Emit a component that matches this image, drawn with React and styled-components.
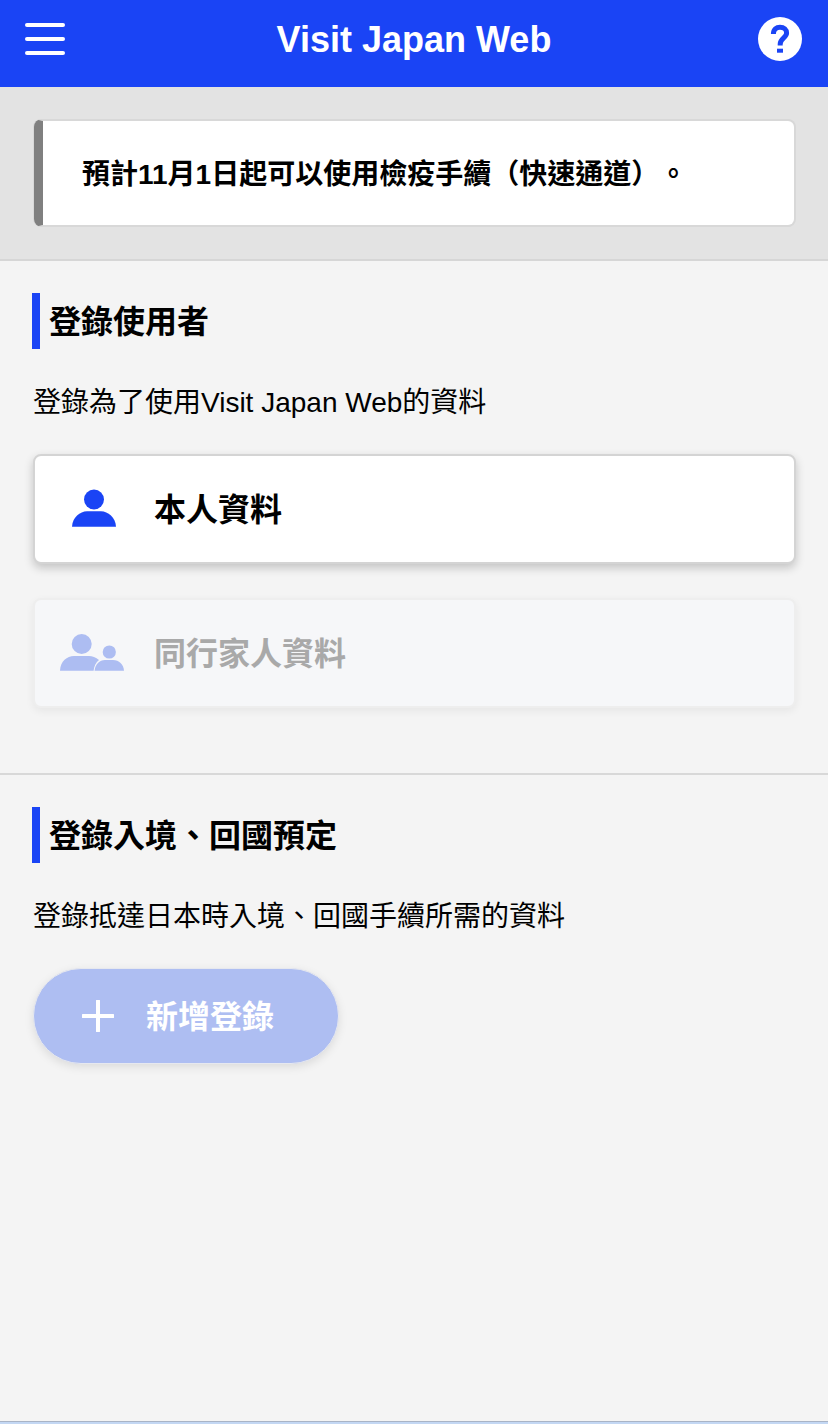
import React from 'react'
import styled, { createGlobalStyle } from 'styled-components'

const App = () => {
  return (
    <>
      <GlobalStyle />
      <Page>
        <Header>
          <MenuButton aria-label='menu'>
            <MenuLine />
            <MenuLine />
            <MenuLine />
          </MenuButton>
          <HeaderTitle>Visit Japan Web</HeaderTitle>
          <HelpIcon />
        </Header>

        <NoticeArea>
          <NoticeCard>
            <NoticeText>預計11月1日起可以使用檢疫手續（快速通道）。</NoticeText>
          </NoticeCard>
        </NoticeArea>

        <Section>
          <SectionTitle>登錄使用者</SectionTitle>
          <SectionDesc>登錄為了使用Visit Japan Web的資料</SectionDesc>
          <CardList>
            <UserCard>
              <PersonIcon />
              <CardLabel>本人資料</CardLabel>
            </UserCard>
            <UserCard $disabled>
              <FamilyIcon />
              <CardLabel>同行家人資料</CardLabel>
            </UserCard>
          </CardList>
        </Section>

        <Section $last>
          <SectionTitle>登錄入境、回國預定</SectionTitle>
          <SectionDesc>登錄抵達日本時入境、回國手續所需的資料</SectionDesc>
          <AddButton>
            <PlusIcon />
            <AddLabel>新增登錄</AddLabel>
          </AddButton>
        </Section>

        <BottomEdge />
      </Page>
    </>
  )
}

const HelpIcon = () => (
  <svg width='44' height='44' viewBox='0 0 44 44'>
    <circle cx='22' cy='22' r='22' fill='#fff' />
    <path d='M15.4 17 C15.4 12.2 18.4 10.2 22 10.2 C26 10.2 28.6 12.6 28.6 16 C28.6 20.6 22.2 21.2 22.2 27 V28.4' fill='none' stroke='#1a44f5' strokeWidth='5' />
    <rect x='19' y='31.7' width='6' height='4' fill='#1a44f5' />
  </svg>
)

const PersonIcon = () => (
  <svg width='64' height='40' viewBox='0 0 64 40'>
    <circle cx='34' cy='10.5' r='10' fill='#1a44f5' />
    <path d='M12 37.7 C12.5 28 20 22.5 27 22.2 H41 C48 22.5 55.5 28 56 37.7 Z' fill='#1a44f5' />
  </svg>
)

const FamilyIcon = () => (
  <svg width='64' height='40' viewBox='0 0 64 40'>
    <circle cx='21.7' cy='11' r='10' fill='#adbdf2' />
    <path d='M0 37.7 C0.5 28 7 23.2 14 23 H29 C32 23 36 24.5 39 27 C36 29.5 34 33 33.6 37.7 Z' fill='#adbdf2' />
    <circle cx='49.3' cy='19' r='6.6' fill='#adbdf2' />
    <path d='M34.6 37.7 C35.2 31 39.5 27.2 45 27 H53 C59 27.2 63.5 31 64 37.7 Z' fill='#adbdf2' />
  </svg>
)

const PlusIcon = () => (
  <svg width='32' height='32' viewBox='0 0 32 32'>
    <path d='M16 1 V31 M1 16 H31' stroke='#fff' strokeWidth='4' strokeLinecap='round' />
  </svg>
)

const GlobalStyle = createGlobalStyle`
  html, body {
    margin: 0;
    padding: 0;
  }

  body {
    background: #f4f4f4;
    font-family: 'Liberation Sans', 'Noto Sans CJK TC', sans-serif;
    color: #000;
    text-spacing-trim: space-all;
  }
`

const Page = styled.div`
  min-height: 100vh;
  display: flex;
  flex-direction: column;
  box-sizing: border-box;
`

const Header = styled.header`
  height: 87px;
  flex-shrink: 0;
  background: #1a44f5;
  display: flex;
  align-items: center;
  justify-content: space-between;
  padding: 0 26px 9px 25px;
  box-sizing: border-box;
`

const MenuButton = styled.div`
  width: 40px;
  height: 32px;
  display: flex;
  flex-direction: column;
  justify-content: space-between;
`

const MenuLine = styled.span`
  height: 4px;
  background: #fff;
  border-radius: 2px;
`

const HeaderTitle = styled.h1`
  margin: 0 0 0 5px;
  padding-top: 2px;
  color: #fff;
  font-size: 36px;
  line-height: 44px;
  font-weight: 700;
`

const NoticeArea = styled.div`
  background: #e3e3e3;
  border-bottom: 2px solid #d6d6d6;
  padding: 32px 32px 32px;
`

const NoticeCard = styled.div`
  height: 108px;
  margin-left: 2px;
  box-sizing: border-box;
  background: #fff;
  border: 2px solid #d8d8d8;
  border-left: 9px solid #808080;
  border-radius: 8px;
  box-shadow: -1px 0 0 #d8d8d8;
  display: flex;
  align-items: center;
  padding-left: 39px;
`

const NoticeText = styled.p`
  margin: 0;
  padding-top: 4px;
  font-size: 28px;
  font-weight: 700;
  line-height: 40px;
`

const Section = styled.section`
  padding: 32px 32px ${props => (props.$last ? '0' : '65px')};
  border-bottom: ${props => (props.$last ? 'none' : '2px solid #d8d8d8')};
`

const SectionTitle = styled.h2`
  margin: 0;
  height: 56px;
  box-sizing: border-box;
  border-left: 8px solid #1a44f5;
  padding: 0 0 4px 9px;
  display: flex;
  align-items: center;
  font-size: 32px;
  font-weight: 700;
`

const SectionDesc = styled.p`
  margin: 33px 0 0 1px;
  font-size: 28px;
  line-height: 42px;
`

const CardList = styled.div`
  margin-top: 30px;
  display: flex;
  flex-direction: column;
  gap: 34px;
`

const UserCard = styled.div`
  height: 110px;
  margin-left: 1px;
  box-sizing: border-box;
  border-radius: 8px;
  display: flex;
  align-items: center;
  gap: 30px;
  padding-left: 25px;
  font-size: 32px;
  font-weight: 700;
  background: ${props => (props.$disabled ? '#f6f7f9' : '#fff')};
  color: ${props => (props.$disabled ? '#a9a9a9' : '#000')};
  border: 2px solid ${props => (props.$disabled ? '#eeeeee' : '#d4d4d4')};
  box-shadow: ${props => (props.$disabled ? '0 3px 8px rgba(0, 0, 0, 0.06)' : '0 4px 10px rgba(0, 0, 0, 0.2)')};
`

const CardLabel = styled.span`
  padding-bottom: 4px;
`

const AddButton = styled.div`
  margin: 30px 0 0 1px;
  width: 306px;
  height: 96px;
  box-sizing: border-box;
  border-radius: 48px;
  border: 1px solid #e6e8ef;
  background: #aebef2;
  color: #fff;
  font-size: 32px;
  font-weight: 700;
  display: flex;
  align-items: center;
  gap: 32px;
  padding-left: 48px;
  box-shadow: 0 3px 10px rgba(0, 0, 0, 0.1);
`

const AddLabel = styled.span`
  padding-bottom: 4px;
`

const BottomEdge = styled.div`
  margin-top: auto;
  height: 3px;
  background: #c3d7f3;
  border-top: 1px solid #a9b4c6;
  box-sizing: border-box;
`

export default App
